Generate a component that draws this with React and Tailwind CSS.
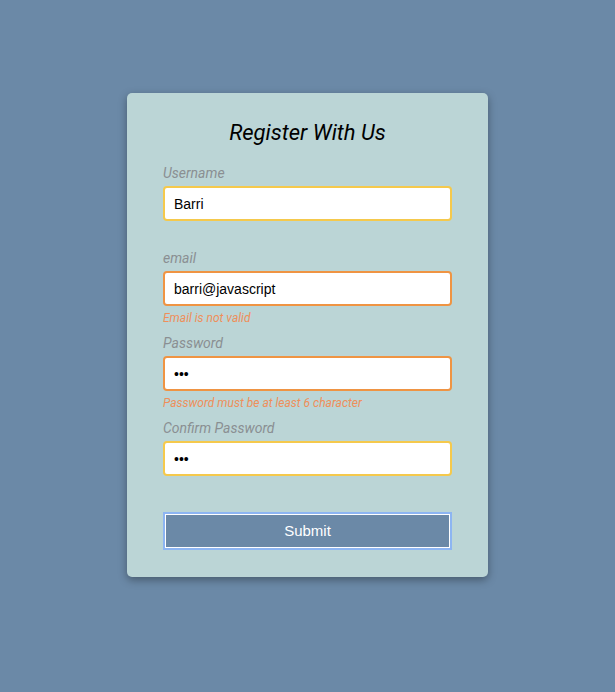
import { useState } from "react";

const fields = [
  { name: "username", label: "Username", type: "text", value: "Barri", error: "" },
  { name: "email", label: "email", type: "text", value: "barri@javascript", error: "Email is not valid" },
  { name: "password", label: "Password", type: "password", value: "123", error: "Password must be at least 6 character" },
  { name: "password2", label: "Confirm Password", type: "password", value: "123", error: "" },
];

export default function App() {
  const [values, setValues] = useState(
    Object.fromEntries(fields.map((f) => [f.name, f.value]))
  );

  return (
    <div className="min-h-[692px] bg-[#6b89a7] pt-[93px] font-['Roboto',sans-serif]">
      <div className="mx-auto w-[361px] rounded-[5px] bg-[#bbd5d6] px-[36px] pt-[24px] pb-[27px] shadow-[0_3px_8px_rgba(0,0,0,0.35)]">
        <h2 className="mb-[14px] text-center text-[22px] leading-[32px] italic text-black">
          Register With Us
        </h2>

        <form onSubmit={(e) => e.preventDefault()}>
          {fields.map((f) => (
            <div key={f.name} className="mb-[7px]">
              <label className="mb-[3px] block text-[14px] leading-[20px] italic text-[#8a8f92]">
                {f.label}
              </label>
              <input
                type={f.type}
                value={values[f.name]}
                onChange={(e) => setValues({ ...values, [f.name]: e.target.value })}
                className={`block h-[35px] w-full rounded-[4px] border-2 bg-white px-[9px] font-['Liberation_Sans',Arial,sans-serif] text-[14px] text-black outline-none ${
                  f.error ? "border-[#ef9443]" : "border-[#f5c94c]"
                }`}
              />
              <small className="mt-[4px] block h-[16px] text-[12px] leading-[16px] italic text-[#ef8f5a]">
                {f.error}
              </small>
            </div>
          ))}

          <button
            type="submit"
            className="mt-[16px] block h-[38px] w-full border-2 border-[#8db5f2] bg-[#6b89a7] font-['Liberation_Sans',Arial,sans-serif] text-[15px] text-white shadow-[inset_0_0_0_1px_#ffffff]"
          >
            Submit
          </button>
        </form>
      </div>
    </div>
  );
}
